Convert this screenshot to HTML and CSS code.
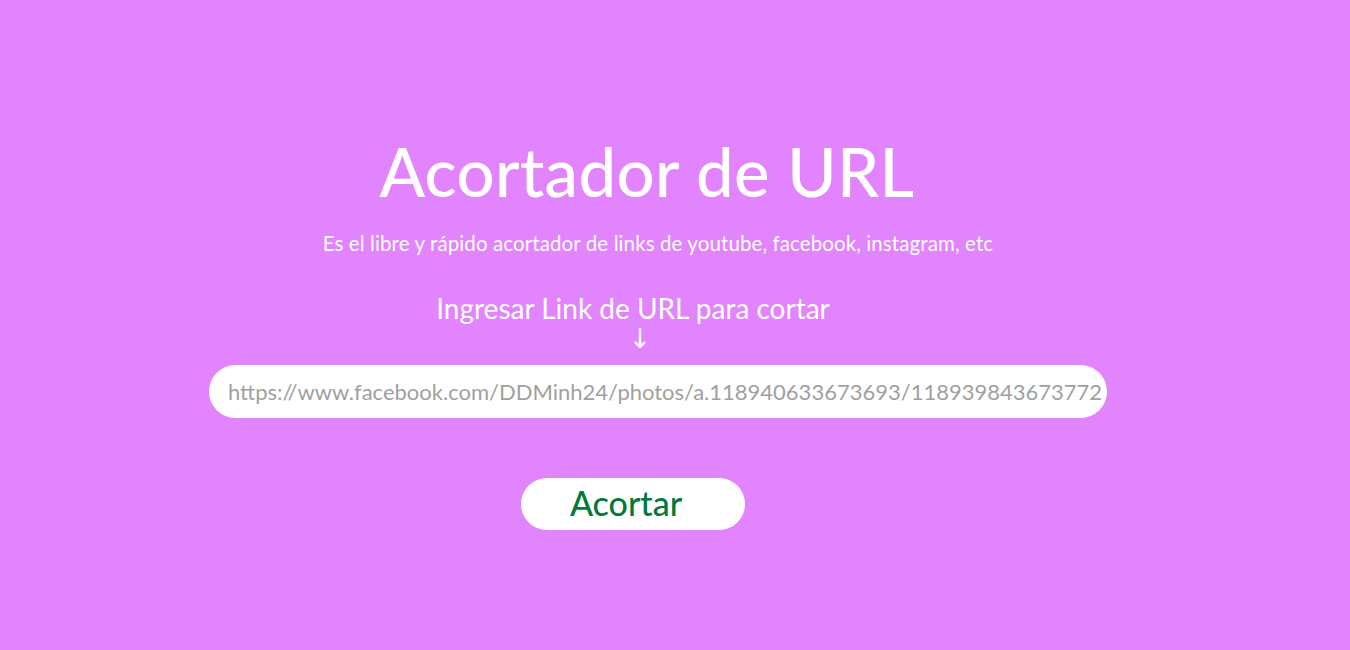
FILE: index.html
```html
<!DOCTYPE html>
<html lang="es">
<head>
<meta charset="utf-8">
<title>Acortador de URL</title>
<link rel="stylesheet" href="styles.css">
</head>
<body>
<main class="page">
  <h1 class="title">Acortador de URL</h1>
  <p class="subtitle">Es el libre y rápido acortador de links de youtube, facebook, instagram, etc</p>
  <label class="label" for="url">Ingresar Link de URL para cortar</label>
  <div class="arrow">↓</div>
  <input id="url" class="url-input" type="text" placeholder="https://www.facebook.com/DDMinh24/photos/a.118940633673693/118939843673772">
  <button class="btn" type="button">Acortar</button>
</main>
</body>
</html>
```
FILE: styles.css
```css
* { box-sizing: border-box; }
html, body { margin: 0; height: 100%; }
body {
  background: #e284fd;
  font-family: "Lato", "Noto Sans", sans-serif;
  color: #fff;
}
.page {
  width: 1316px;
  display: flex;
  flex-direction: column;
  align-items: center;
  padding-top: 128px;
}
.title {
  margin: 0 0 0 -22px;
  font-size: 67px;
  font-weight: 500;
  line-height: 86px;
  letter-spacing: 0.4px;
}
.subtitle {
  margin: 17px 0 0 0;
  font-size: 20.5px;
  line-height: 24px;
  letter-spacing: 0.1px;
}
.label {
  margin: 39px 0 0 -50px;
  font-size: 28px;
  line-height: 28px;
}
.arrow {
  margin: 5px 0 0 -36px;
  font-family: "DejaVu Sans", sans-serif;
  font-size: 27px;
  line-height: 24px;
}
.url-input {
  margin: 14px 0 0 0;
  width: 898px;
  height: 53px;
  border: none;
  border-radius: 27px;
  padding: 0 0 0 19px;
  font-family: "Lato", sans-serif;
  font-size: 22px;
  color: #999;
  outline: none;
}
.url-input::placeholder { color: #a0a0a0; }
.btn {
  margin: 60px 0 0 -50px;
  width: 224px;
  height: 52px;
  border: none;
  border-radius: 26px;
  background: #fff;
  color: #007a3a;
  font-family: "Lato", sans-serif;
  font-size: 34px;
  font-weight: 500;
  padding: 0 14px 4px 0;
}
```
